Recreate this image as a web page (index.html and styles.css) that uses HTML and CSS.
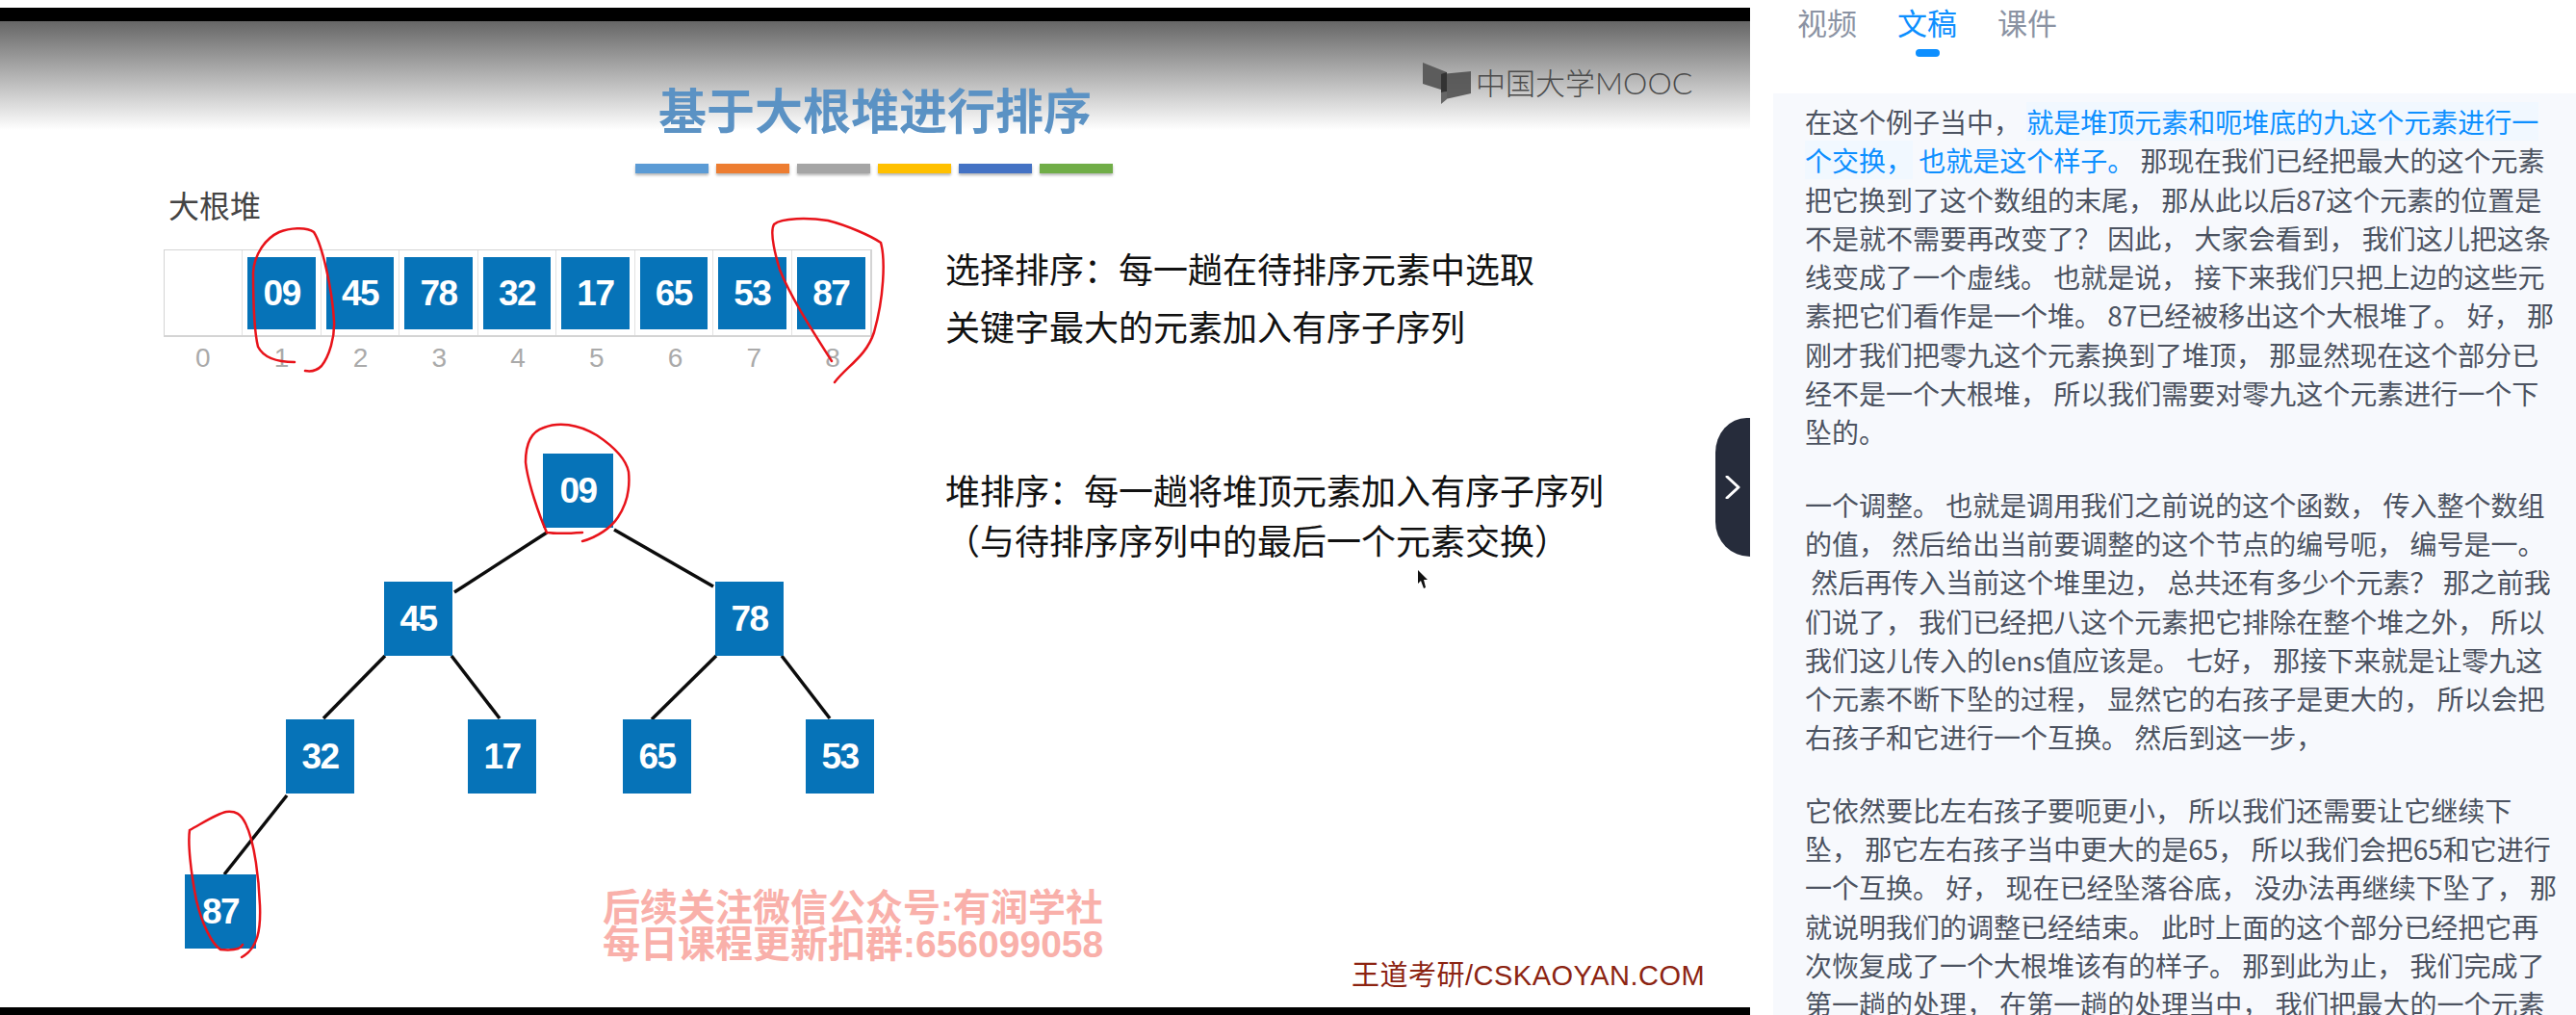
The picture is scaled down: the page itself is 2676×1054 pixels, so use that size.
FILE: index.html
```html
<!DOCTYPE html>
<html lang="zh-CN">
<head>
    <meta charset="UTF-8">
    <title>基于大根堆进行排序</title>
    <link rel="stylesheet" href="styles.css">
</head>
<body>
    <div class="video">
        <div class="slide">
            <h1 class="title">基于大根堆进行排序</h1>
            <div class="bars">
                <span class="bar bar-blue"></span>
                <span class="bar bar-orange"></span>
                <span class="bar bar-gray"></span>
                <span class="bar bar-yellow"></span>
                <span class="bar bar-indigo"></span>
                <span class="bar bar-green"></span>
            </div>

            <div class="row row-array">
                <div class="col-left">
                    <div class="array-label">大根堆</div>
                    <div class="array">
                        <div class="cell"></div>
                        <div class="cell"><b>09</b></div>
                        <div class="cell"><b>45</b></div>
                        <div class="cell"><b>78</b></div>
                        <div class="cell"><b>32</b></div>
                        <div class="cell"><b>17</b></div>
                        <div class="cell"><b>65</b></div>
                        <div class="cell"><b>53</b></div>
                        <div class="cell"><b>87</b></div>
                    </div>
                    <div class="indexes">
                        <span>0</span><span>1</span><span>2</span><span>3</span><span>4</span><span>5</span><span>6</span><span>7</span><span>8</span>
                    </div>
                </div>
                <p class="note note-select">选择排序：每一趟在待排序元素中选取<br>关键字最大的元素加入有序子序列</p>
            </div>

            <div class="row row-tree">
                <div class="tree">
                    <svg class="tree-lines" viewBox="0 386 982 660" width="982" height="660">
                        <g stroke="#0c0c0c" stroke-width="3.5" fill="none">
                            <path d="M568 553L472 615"/>
                            <path d="M638 550L741 609"/>
                            <path d="M400 681L336 746"/>
                            <path d="M469 681L519 746"/>
                            <path d="M744 681L677 747"/>
                            <path d="M812 681L862 746"/>
                            <path d="M298 826L233 908"/>
                        </g>
                    </svg>
                    <div class="node node-09">09</div>
                    <div class="node node-45">45</div>
                    <div class="node node-78">78</div>
                    <div class="node node-32">32</div>
                    <div class="node node-17">17</div>
                    <div class="node node-65">65</div>
                    <div class="node node-53">53</div>
                    <div class="node node-87">87</div>
                </div>
                <p class="note note-heap">堆排序：每一趟将堆顶元素加入有序子序列<br>（与待排序序列中的最后一个元素交换）</p>
            </div>

            <!-- things lying over the slide -->
            <div class="logo">
                <svg class="logo-icon" viewBox="0 0 50 43" width="50" height="43">
                    <path d="M0 0L25 10V30L0 22Z" fill="#5c5c5c"/>
                    <path d="M19 12L50 9V32L19 39Z" fill="#4a4a4a" opacity=".85"/>
                    <path d="M19 12L25 10V30L19 31Z" fill="#333"/>
                    <path d="M19 31L25 30V38L19 43Z" fill="#666"/>
                </svg>
                <span>中国大学<span class="logo-latin">MOOC</span></span>
            </div>
            <div class="watermark">后续关注微信公众号:有润学社<br>每日课程更新扣群:656099058</div>
            <div class="credit">王道考研/CSKAOYAN.COM</div>
            <svg class="cursor" viewBox="0 0 12 20" width="12" height="20">
                <path d="M1 0V14L4 11L7 19L9 18L7 10L11 10Z" fill="#111"/>
            </svg>
            <svg class="ink" viewBox="0 22 1818 1024" width="1818" height="1024">
                <g fill="none" stroke="#e8131a" stroke-width="2.5" stroke-linecap="round">
                    <path d="M306 376C290 376 274 372 268 360C263 340 263 300 263 283C264 265 275 248 290 241C300 237 318 235 326 241C335 255 345 300 347 333C348 350 342 370 334 380C328 386 322 386 317 385"/>
                    <path d="M864 375C845 345 822 310 810 280C804 260 800 240 804 233C812 226 840 226 860 229C880 234 905 245 915 252C920 270 918 310 908 345C900 370 880 380 867 397"/>
                    <path d="M605 553C590 554 575 554 568 553C560 535 548 500 546 480C546 460 552 448 565 444C580 438 600 440 620 452C635 462 650 475 653 490C655 510 650 525 642 537C635 548 620 558 605 562"/>
                    <path d="M252 981C250 986 240 987 229 986C220 980 210 960 204 935C198 905 195 875 197 862C210 855 225 845 235 843C245 842 250 845 255 855C265 875 269 915 270 940C271 965 268 985 251 994"/>
                </g>
            </svg>
        </div>
        <div class="toggle">
            <svg viewBox="0 0 16 24" width="16" height="24">
                <path d="M2 1L14 12L2 23" fill="none" stroke="#fff" stroke-width="3" stroke-linecap="round" stroke-linejoin="round"/>
            </svg>
        </div>
    </div>

    <div class="side">
        <div class="tabs">
            <div class="tab">视频</div>
            <div class="tab active">文稿</div>
            <div class="tab">课件</div>
        </div>
        <div class="transcript">
<p>在这个例子当中， <span class="now now-bg">就是堆顶元素和呃堆底的九这个元素进行一
个交换，</span> <span class="now">也就是这个样子。</span> 那现在我们已经把最大的这个元素
把它换到了这个数组的末尾， 那从此以后87这个元素的位置是
不是就不需要再改变了？ 因此， 大家会看到， 我们这儿把这条
线变成了一个虚线。 也就是说， 接下来我们只把上边的这些元
素把它们看作是一个堆。 87已经被移出这个大根堆了。 好， 那
刚才我们把零九这个元素换到了堆顶， 那显然现在这个部分已
经不是一个大根堆， 所以我们需要对零九这个元素进行一个下
坠的。</p>
<p>一个调整。 也就是调用我们之前说的这个函数， 传入整个数组
的值， 然后给出当前要调整的这个节点的编号呃， 编号是一。
 然后再传入当前这个堆里边， 总共还有多少个元素？ 那之前我
们说了， 我们已经把八这个元素把它排除在整个堆之外， 所以
我们这儿传入的lens值应该是。 七好， 那接下来就是让零九这
个元素不断下坠的过程， 显然它的右孩子是更大的， 所以会把
右孩子和它进行一个互换。 然后到这一步，</p>
<p>它依然要比左右孩子要呃更小， 所以我们还需要让它继续下
坠， 那它左右孩子当中更大的是65， 所以我们会把65和它进行
一个互换。 好， 现在已经坠落谷底， 没办法再继续下坠了， 那
就说明我们的调整已经结束。 此时上面的这个部分已经把它再
次恢复成了一个大根堆该有的样子。 那到此为止， 我们完成了
第一趟的处理， 在第一趟的处理当中， 我们把最大的一个元素</p>
        </div>
    </div>
</body>
</html>
```

FILE: styles.css
```css
* {
    box-sizing: border-box;
}
html, body {
    height: 100%;
}
body {
    margin: 0;
    display: flex;
    background: #fff;
    overflow: hidden;
    font-family: "Liberation Sans", "Noto Sans CJK SC", sans-serif;
}

/* left: the video */
.video {
    position: relative;
    width: 1818px;
    height: 1046px;
    margin-top: 8px;
    padding-top: 14px;
    background: #000;
    flex-shrink: 0;
}
.video::after {
    content: "";
    position: absolute;
    left: 0;
    right: 0;
    top: 1038px;
    height: 16px;
    background: #000;
}
.slide {
    position: relative;
    height: 1024px;
    background: linear-gradient(#666 0, #fff 113px, #fff 100%);
}
.title {
    margin: 0;
    padding: 62px 0 0 684px;
    font-family: "Noto Sans CJK SC", sans-serif;
    font-size: 50px;
    line-height: 56px;
    font-weight: 700;
    color: #5b92c4;
}
.bars {
    display: flex;
    gap: 8px;
    margin: 30px 0 0 660px;
}
.bar {
    width: 76px;
    height: 10px;
    box-shadow: 0 2px 3px rgba(0, 0, 0, 0.3);
}
.bar-blue { background: #5b9bd5; }
.bar-orange { background: #ed7d31; }
.bar-gray { background: #a5a5a5; }
.bar-yellow { background: #ffc000; }
.bar-indigo { background: #4472c4; }
.bar-green { background: #70ad47; }

.row {
    display: flex;
    align-items: flex-start;
}
.col-left {
    width: 982px;
    padding-left: 170px;
}
.array-label {
    margin: 17px 0 0 5px;
    font-family: "Noto Sans CJK SC", sans-serif;
    font-size: 32px;
    line-height: 30px;
    color: #444;
}
.array {
    display: grid;
    grid-template-columns: repeat(9, 1fr);
    width: 736px;
    height: 91px;
    margin-top: 32px;
    border: 2px solid #d4d4d4;
    border-top-width: 1px;
    border-left-width: 1px;
}
.cell {
    padding: 7px 5px 6px;
    border-right: 1px solid #e2e2e2;
}
.cell:last-child {
    border-right: none;
}
.cell b, .node {
    display: flex;
    align-items: center;
    justify-content: center;
    height: 100%;
    background: #0673b8;
    color: #fff;
    font-weight: 700;
    font-size: 37px;
    letter-spacing: -1.5px;
}
.indexes {
    display: grid;
    grid-template-columns: repeat(9, 1fr);
    width: 736px;
    margin-top: 8px;
    text-align: center;
    font-size: 28px;
    line-height: 28px;
    color: #aaa;
}
.note {
    margin: 0;
    font-family: "Noto Sans CJK SC", sans-serif;
    font-size: 36px;
    color: #111;
    white-space: nowrap;
}
.note-select {
    margin-top: 68px;
    line-height: 60px;
}
.note-heap {
    margin-top: 96px;
    line-height: 52px;
}

/* heap tree, nodes sit on the diagram */
.tree {
    position: relative;
    width: 982px;
    height: 660px;
    flex-shrink: 0;
}
.tree-lines {
    position: absolute;
    left: 0;
    top: 0;
}
.node {
    position: absolute;
    width: 71px;
    height: 77px;
}
.node-09 { left: 564px; top: 85px; width: 73px; }
.node-45 { left: 399px; top: 218px; }
.node-78 { left: 743px; top: 218px; }
.node-32 { left: 297px; top: 361px; }
.node-17 { left: 486px; top: 361px; }
.node-65 { left: 647px; top: 361px; }
.node-53 { left: 837px; top: 361px; }
.node-87 { left: 192px; top: 522px; width: 74px; }

.logo {
    position: absolute;
    left: 1478px;
    top: 43px;
    display: flex;
    gap: 5px;
    color: #4b4b4b;
    font-family: "Noto Sans CJK SC", sans-serif;
    font-size: 31px;
    font-weight: 300;
    line-height: 40px;
}
.logo-latin {
    font-family: "Lato", sans-serif;
    font-size: 32px;
    font-weight: 300;
}
.watermark {
    position: absolute;
    left: 626px;
    top: 902px;
    font-size: 39px;
    line-height: 38px;
    font-weight: 700;
    color: #f9b0aa;
    white-space: nowrap;
}
.credit {
    position: absolute;
    left: 1404px;
    top: 976px;
    font-size: 29px;
    line-height: 30px;
    letter-spacing: 0.5px;
    color: #8c2412;
    white-space: nowrap;
}
.cursor {
    position: absolute;
    left: 1472px;
    top: 570px;
}
.ink {
    position: absolute;
    left: 0;
    top: 0;
}
.toggle {
    position: absolute;
    right: 0;
    top: 426px;
    z-index: 2;
    display: flex;
    align-items: center;
    justify-content: flex-end;
    width: 36px;
    height: 144px;
    padding-right: 10px;
    border-radius: 36px 0 0 40px / 40px 0 0 40px;
    background: #262c3b;
}

/* right: tabs and transcript */
.side {
    flex: 1;
    min-width: 0;
    display: flex;
    flex-direction: column;
    padding-left: 24px;
}
.tabs {
    display: flex;
    gap: 42px;
    padding: 3px 0 38px 25px;
    font-family: "Noto Sans CJK SC", sans-serif;
    font-size: 31px;
    line-height: 40px;
    color: #8b93a3;
}
.tab::after {
    content: "";
    display: block;
    width: 25px;
    height: 8px;
    margin: 8px auto 0;
    border-radius: 4px;
}
.tab.active {
    color: #0d8fff;
}
.tab.active::after {
    background: #0d8fff;
}
.transcript {
    flex: 1;
    min-height: 0;
    overflow: hidden;
    padding: 9px 0 0 33px;
    background: #f7f9fd;
    font-family: "Noto Sans CJK SC", sans-serif;
    font-size: 28px;
    line-height: 40.3px;
    color: #4c5361;
}
.transcript p {
    margin: 0 0 35px;
    white-space: pre;
}
.now {
    color: #0d8fff;
}
.now-bg {
    background: #f1f8ff;
}
```
